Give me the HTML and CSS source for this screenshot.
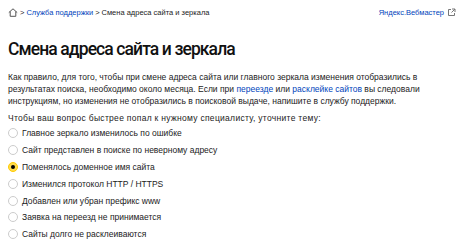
FILE: index.html
```html
<!DOCTYPE html>
<html lang="ru">

<head>
    <meta charset="UTF-8">
    <meta name="viewport" content="width=device-width, initial-scale=1.0">
    <title>Смена адреса сайта и зеркала</title>
    <link rel="stylesheet" href="styles.css">
</head>

<body>
    <div class="top-bar">
        <div class="crumbs">
            <svg class="home-icon" width="10" height="9" viewBox="0 0 10 9">
                <path d="M0.8 4.6 L5 0.8 L9.2 4.6 M2.2 3.5 V8.3 H7.8 V3.5" fill="none" stroke="#555" stroke-width="1"/>
            </svg>
            <span class="sep">&gt;</span>
            <a href="#" class="link">Служба поддержки</a>
            <span class="sep">&gt;</span>
            <span>Смена адреса сайта и зеркала</span>
        </div>
        <a href="#" class="link service">Яндекс.Вебмастер
            <svg width="9" height="9" viewBox="0 0 9 9">
                <path d="M4 1.5 H1.5 V7.5 H7.5 V5 M5 1 H8 V4 M8 1 L4.5 4.5" fill="none" stroke="#777" stroke-width="1"/>
            </svg>
        </a>
    </div>

    <h1>Смена адреса сайта и зеркала</h1>

    <p class="text">
        <span>Как правило, для того, чтобы при смене адреса сайта или главного зеркала изменения отобразились в</span><br>
        <span>результатах поиска, необходимо около месяца. Если при</span> <a href="#" class="link">переезде</a> <span>или</span> <a href="#" class="link">расклейке сайтов</a> <span>вы следовали</span><br>
        <span>инструкциям, но изменения не отобразились в поисковой выдаче, напишите в службу поддержки.</span>
    </p>

    <p class="text hint">Чтобы ваш вопрос быстрее попал к нужному специалисту, уточните тему:</p>

    <form class="topics">
        <label class="topic"><span class="radio"></span>Главное зеркало изменилось по ошибке</label>
        <label class="topic"><span class="radio"></span>Сайт представлен в поиске по неверному адресу</label>
        <label class="topic"><span class="radio checked"></span>Поменялось доменное имя сайта</label>
        <label class="topic"><span class="radio"></span>Изменился протокол HTTP / HTTPS</label>
        <label class="topic"><span class="radio"></span>Добавлен или убран префикс www</label>
        <label class="topic"><span class="radio"></span>Заявка на переезд не принимается</label>
        <label class="topic"><span class="radio"></span>Сайты долго не расклеиваются</label>
    </form>
</body>

</html>
```

FILE: styles.css
```css
* {
    margin: 0;
    padding: 0;
    box-sizing: border-box;
}

body {
    background-color: white;
    color: #222;
    font-family: "Liberation Sans", Arial, sans-serif;
    padding: 0 8px;
}

.link {
    color: #0044bb;
    text-decoration: none;
}

.top-bar {
    display: flex;
    align-items: center;
    justify-content: space-between;
    height: 24px;
    padding-top: 1px;
    font-size: 7.5px;
}

.crumbs {
    display: flex;
    align-items: center;
    gap: 2px;
}

.service {
    display: flex;
    align-items: center;
    gap: 3px;
    margin-right: 10px;
}

h1 {
    font-family: Roboto, "Noto Sans", sans-serif;
    font-size: 17.5px;
    font-weight: 500;
    letter-spacing: -0.9px;
    margin-top: 12px;
    line-height: 26px;
    color: #111;
}

.text {
    font-size: 8.5px;
    line-height: 12px;
    margin-top: 9px;
    white-space: nowrap;
}

.hint {
    margin-top: 5px;
    letter-spacing: 0.3px;
}

.topics {
    display: flex;
    flex-direction: column;
    margin-top: 1px;
}

.topic {
    display: flex;
    align-items: center;
    gap: 4px;
    height: 16.8px;
    font-size: 8.5px;
}

.radio {
    width: 10px;
    height: 10px;
    border-radius: 50%;
    border: 1px solid #ccc;
    display: flex;
    align-items: center;
    justify-content: center;
}

.radio.checked {
    border-color: #ffcc00;
    background-color: #ffdb4d;
}

.radio.checked::after {
    content: "";
    width: 4px;
    height: 4px;
    border-radius: 50%;
    background-color: #000;
}
```
